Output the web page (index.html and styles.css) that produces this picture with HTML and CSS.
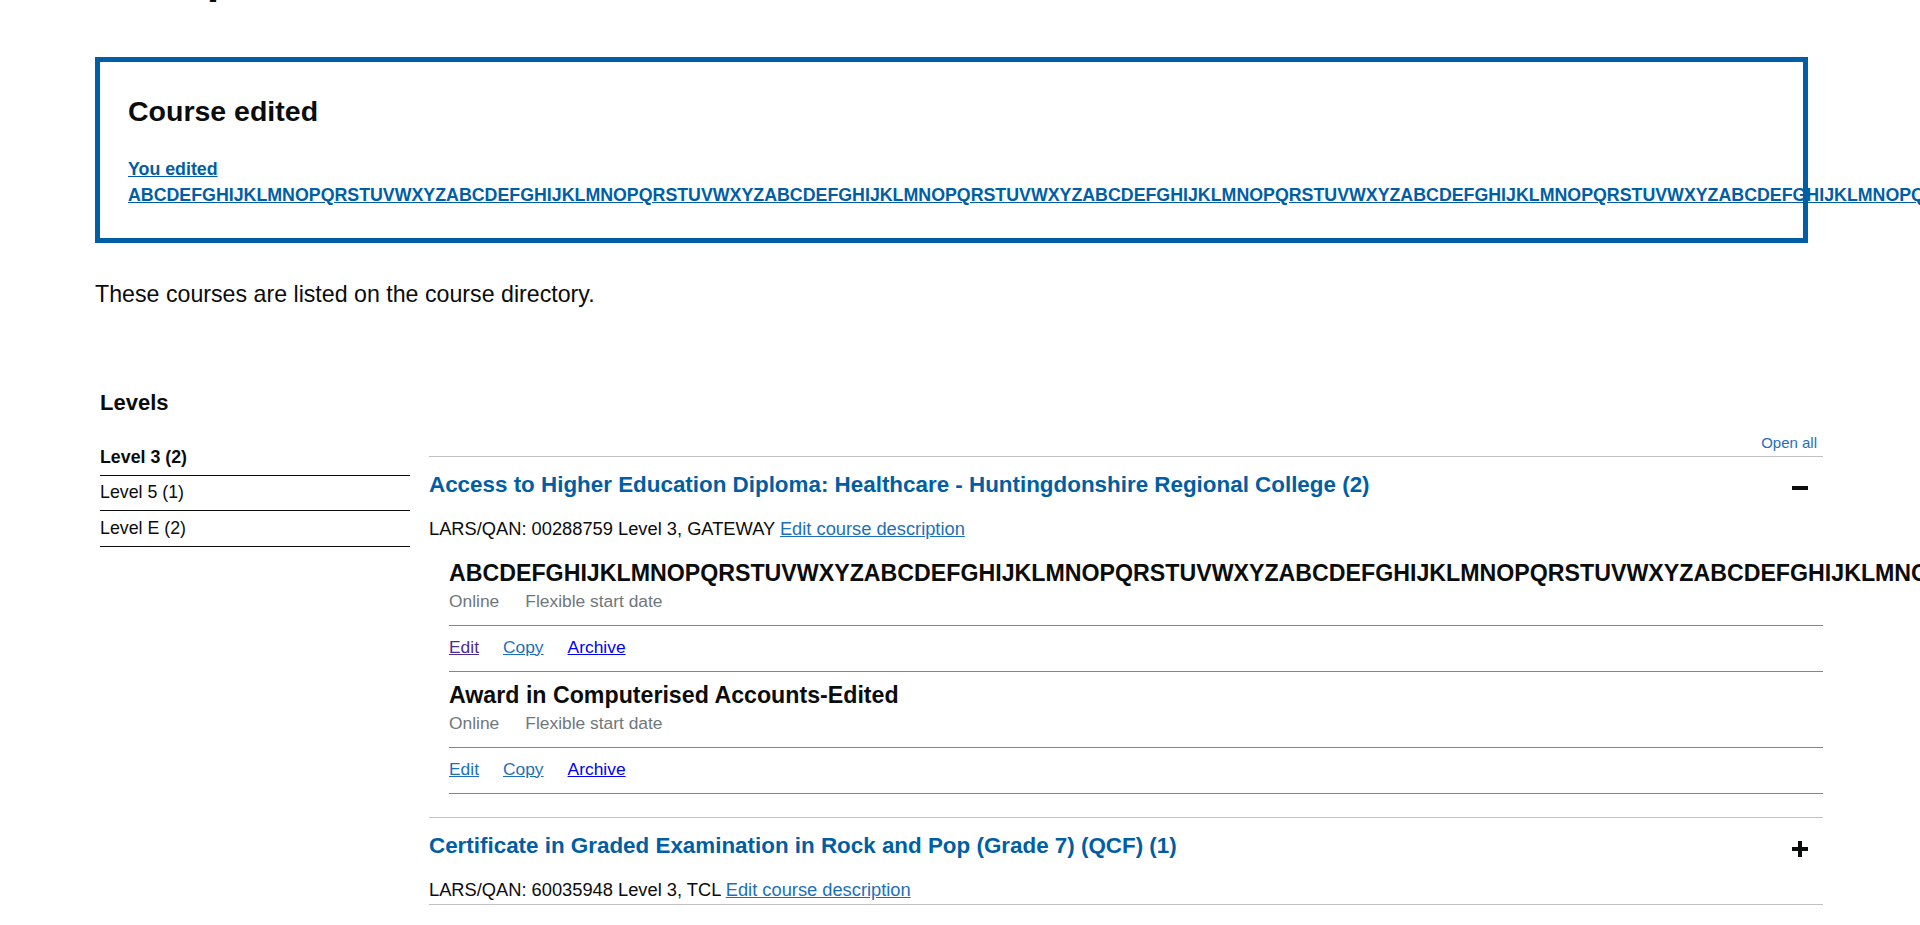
FILE: index.html
```html
<!DOCTYPE html>
<html lang="en">
<head>
<meta charset="utf-8">
<title>Your published courses</title>
<link rel="stylesheet" href="styles.css">
</head>
<body>
<header class="site-header">
  <div class="site-header-inner">
    <span class="site-logo">GOV.UK</span>
    <span class="site-service">Course directory</span>
  </div>
</header>
<main class="page">
  <h1 class="page-title">Your published courses</h1>

  <div class="banner">
    <h2 class="banner-title">Course edited</h2>
    <p class="banner-body"><a class="banner-link" href="#">You edited ABCDEFGHIJKLMNOPQRSTUVWXYZABCDEFGHIJKLMNOPQRSTUVWXYZABCDEFGHIJKLMNOPQRSTUVWXYZABCDEFGHIJKLMNOPQRSTUVWXYZABCDEFGHIJKLMNOPQRSTUVWXYZABCDEFGHIJKLMNOPQRSTUVWXYZABCDEFGHIJKLMNOPQRSTUVWXYZABCDEFGHIJKLMNOPQRSTUVWXYZABCDEFGHIJKLMNOPQRSTUVWXYZABCDEFGHIJKLMNOPQRSTUVWXYZABCDEFGHIJKLMNOPQRSTUVWXYZABCDEFGHIJKLMNOPQRSTUVWXYZABCDEFGHIJKLMNOPQRSTUVWXYZABCDEFGHIJKLMNOPQRSTUVWXYZ</a></p>
  </div>

  <p class="lead">These courses are listed on the course directory.</p>

  <div class="layout">
    <nav class="levels">
      <h2 class="levels-title">Levels</h2>
      <ul class="levels-list">
        <li class="levels-item is-current">Level 3 (2)</li>
        <li class="levels-item">Level 5 (1)</li>
        <li class="levels-item">Level E (2)</li>
      </ul>
    </nav>

    <div class="accordion">
      <div class="accordion-controls"><a class="open-all" href="#">Open all</a></div>

      <section class="acc-section is-open">
        <div class="acc-header">
          <div class="acc-heading-row">
            <h3 class="acc-heading">Access to Higher Education Diploma: Healthcare - Huntingdonshire Regional College (2)</h3>
            <span class="acc-icon acc-icon-minus"></span>
          </div>
          <p class="acc-summary">LARS/QAN: 00288759 Level 3, GATEWAY <a class="content-link" href="#">Edit course description</a></p>
        </div>
        <ul class="course-list">
          <li class="course">
            <div class="course-main">
              <p class="course-name">ABCDEFGHIJKLMNOPQRSTUVWXYZABCDEFGHIJKLMNOPQRSTUVWXYZABCDEFGHIJKLMNOPQRSTUVWXYZABCDEFGHIJKLMNOPQRSTUVWXYZABCDEFGHIJKLMNOPQRSTUVWXYZABCDEFGHIJKLMNOPQRSTUVWXYZABCDEFGHIJKLMNOPQRSTUVWXYZABCDEFGHIJKLMNOPQRSTUVWXYZABCDEFGHIJKLMNOPQRSTUVWXYZABCDEFGHIJKLMNOPQRSTUVWXYZ</p>
              <p class="course-meta"><span class="meta-item">Online</span><span class="meta-item">Flexible start date</span></p>
            </div>
            <div class="course-actions">
              <a class="action action-visited" href="#">Edit</a>
              <a class="action" href="#">Copy</a>
              <a class="action action-plain" href="#">Archive</a>
            </div>
          </li>
          <li class="course">
            <div class="course-main">
              <p class="course-name">Award in Computerised Accounts-Edited</p>
              <p class="course-meta"><span class="meta-item">Online</span><span class="meta-item">Flexible start date</span></p>
            </div>
            <div class="course-actions">
              <a class="action" href="#">Edit</a>
              <a class="action" href="#">Copy</a>
              <a class="action action-plain" href="#">Archive</a>
            </div>
          </li>
        </ul>
      </section>

      <section class="acc-section">
        <div class="acc-header">
          <div class="acc-heading-row">
            <h3 class="acc-heading">Certificate in Graded Examination in Rock and Pop (Grade 7) (QCF) (1)</h3>
            <span class="acc-icon acc-icon-plus"></span>
          </div>
          <p class="acc-summary">LARS/QAN: 60035948 Level 3, TCL <a class="content-link" href="#">Edit course description</a></p>
        </div>
      </section>
    </div>
  </div>
</main>
<footer class="site-footer">
  <p class="footer-text">© Crown copyright</p>
</footer>
<script src="script.js"></script>
</body>
</html>
```

FILE: styles.css
```css
* { box-sizing: border-box; }

html, body {
  margin: 0;
  padding: 0;
  background: #ffffff;
}

::-webkit-scrollbar {
  width: 17px;
  height: 17px;
  background: #f1f1f1;
}

::-webkit-scrollbar-track {
  background: #f1f1f1;
}

::-webkit-scrollbar-thumb {
  background: #c1c1c1;
  border: 2px solid #f1f1f1;
}

::-webkit-scrollbar-button:single-button {
  display: block;
  width: 17px;
  height: 17px;
  background: #f1f1f1;
}

::-webkit-scrollbar-corner {
  background: #dcdcdc;
}

body {
  font-family: "Liberation Sans", Arial, sans-serif;
  color: #0b0c0c;
}

a { color: #1d70b8; }

.site-header {
  background: #0b0c0c;
  height: 80px;
  width: 1920px;
}

.site-header-inner {
  display: flex;
  align-items: center;
  gap: 30px;
  height: 80px;
  padding-left: 95px;
  color: #ffffff;
}

.site-logo {
  font-weight: bold;
  font-size: 36px;
}

.site-service {
  font-weight: bold;
  font-size: 22px;
}

.page {
  width: 1713px;
  margin-left: 95px;
  padding-top: 138px;
}

.page-title {
  margin: 0 0 54px;
  font-size: 45px;
  line-height: 50px;
  font-weight: bold;
}

/* Banner */
.banner {
  border: 5px solid #005ea5;
  padding: 32px 28px 30px;
  width: 1713px;
}

.banner-title {
  margin: 0 0 27px;
  font-size: 28.5px;
  line-height: 35px;
  font-weight: bold;
}

.banner-body {
  margin: 0;
  font-size: 17.8px;
  line-height: 26px;
  font-weight: bold;
}

.banner-link {
  color: #005ea5;
}

.lead {
  margin: 36px 0 80px;
  font-size: 23.2px;
  line-height: 30px;
}

/* Layout */
.layout {
  display: grid;
  grid-template-columns: 334px 1394px;
  width: 1728px;
}

.levels {
  padding-left: 5px;
}

.levels-title {
  margin: 0 0 23px;
  font-size: 22px;
  line-height: 28px;
  font-weight: bold;
}

.levels-list {
  list-style: none;
  margin: 0;
  padding: 0;
  width: 310px;
}

.levels-item {
  padding: 4.5px 0 5px;
  font-size: 17.8px;
  line-height: 25px;
  border-bottom: 1px solid #0b0c0c;
}

.levels-item.is-current {
  font-weight: bold;
}

/* Accordion */
.accordion {
  padding-top: 44px;
  border-bottom: 1px solid #bfc1c3;
}

.accordion-controls {
  display: flex;
  justify-content: flex-end;
  padding-right: 6px;
  margin-bottom: 3px;
  font-size: 15px;
  line-height: 20px;
}

.open-all {
  text-decoration: none;
  color: #1d70b8;
}

.acc-section {
  border-top: 1px solid #bfc1c3;
}

.acc-section.is-open {
  padding-bottom: 23.5px;
}

.acc-header {
  padding: 13px 0 2px;
}

.acc-heading-row {
  position: relative;
}

.acc-heading {
  margin: 0;
  font-size: 22.4px;
  line-height: 30px;
  font-weight: bold;
  color: #005ea5;
}

.acc-icon {
  position: absolute;
  right: 15px;
  top: 10px;
  width: 16px;
  height: 16px;
}

.acc-icon::before,
.acc-icon::after {
  content: "";
  position: absolute;
  background: #0b0c0c;
}

.acc-icon::before {
  left: 0;
  top: 6px;
  width: 16px;
  height: 4px;
}

.acc-icon-minus::after {
  display: none;
}

.acc-icon-plus::after {
  left: 6px;
  top: 0;
  width: 4px;
  height: 16px;
}

.acc-summary {
  margin: 15.5px 0 0;
  font-size: 18.3px;
  line-height: 25px;
}

.content-link {
  color: #1d70b8;
}

/* Courses */
.course-list {
  list-style: none;
  margin: 7px 0 0 20px;
  padding: 0;
}

.course-main {
  padding: 9px 0 12.5px;
  border-bottom: 1px solid #858585;
}

.course-name {
  margin: 0;
  font-size: 23.2px;
  line-height: 28px;
  font-weight: bold;
  white-space: nowrap;
}

.course-meta {
  display: flex;
  gap: 26px;
  margin: 2px 0 0;
  font-size: 17.4px;
  line-height: 24px;
  color: #6f777b;
}

.course-actions {
  display: flex;
  gap: 24px;
  padding: 8.5px 0 12px;
  border-bottom: 1px solid #858585;
  font-size: 17.4px;
  line-height: 24px;
}

.action {
  color: #1d70b8;
}

.action-visited {
  color: #4c2c92;
}

.action-plain {
  color: #0000ee;
}

/* Footer */
.site-footer {
  margin-top: 60px;
  height: 257px;
  width: 1920px;
  background: #f3f2f1;
  border-top: 1px solid #a1acb2;
  padding: 40px 95px;
}

.footer-text {
  margin: 0;
  font-size: 17.8px;
  color: #454a4c;
}
```

FILE: script.js
```js
if ('scrollRestoration' in history) {
  history.scrollRestoration = 'manual';
}
window.scrollTo(0, 265);
window.addEventListener('load', function () {
  window.scrollTo(0, 265);
});
```
